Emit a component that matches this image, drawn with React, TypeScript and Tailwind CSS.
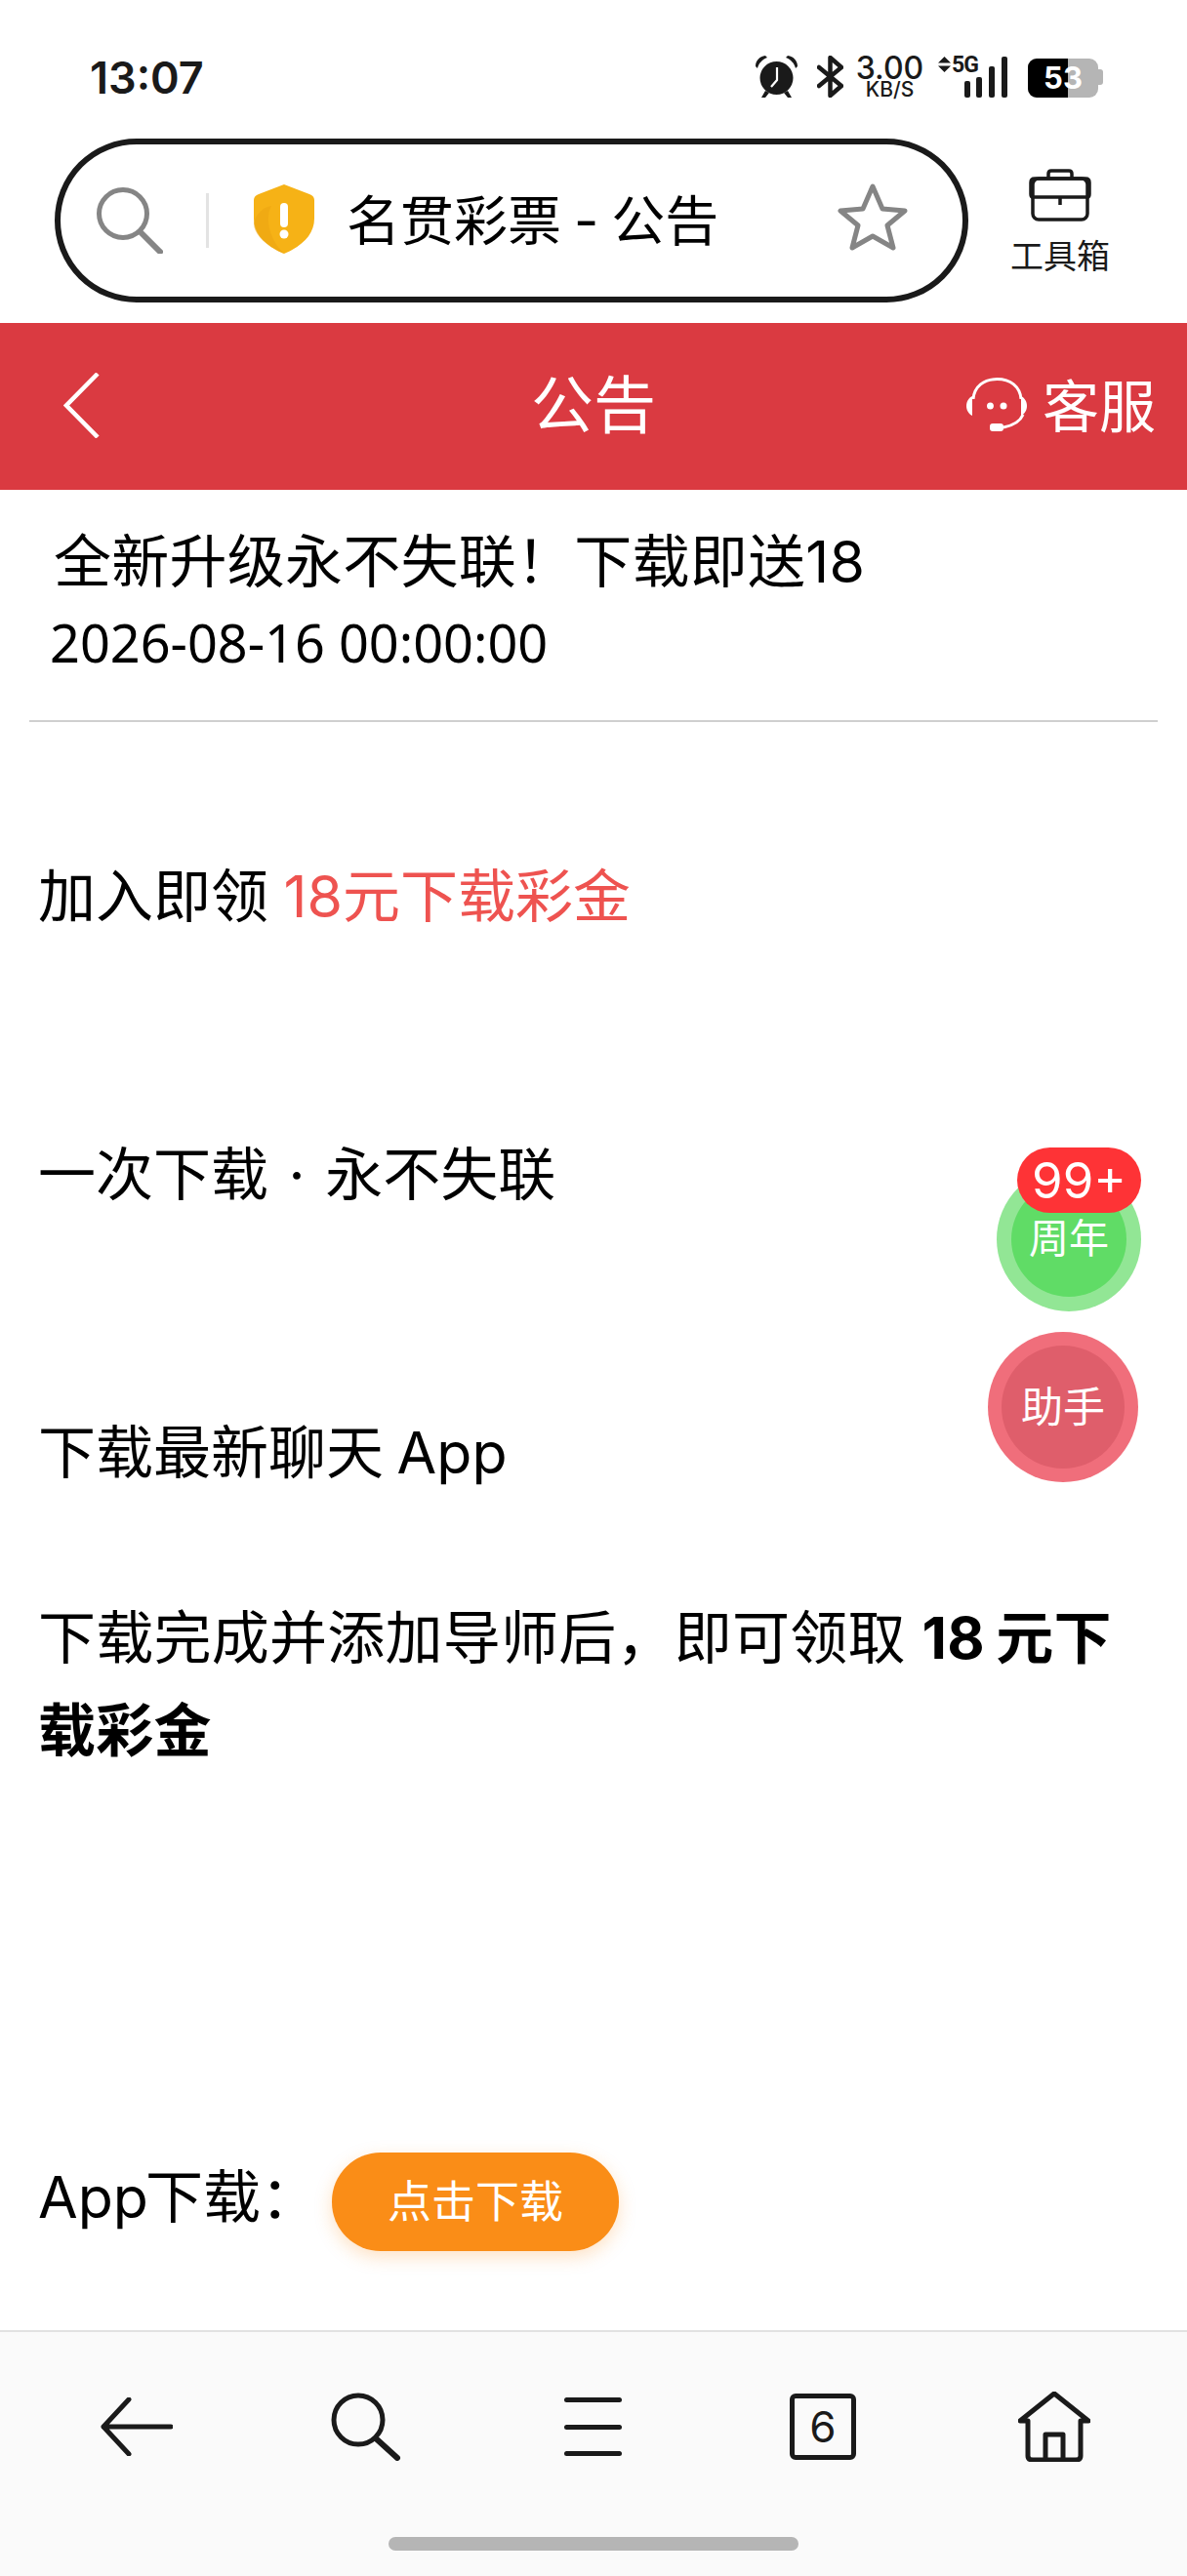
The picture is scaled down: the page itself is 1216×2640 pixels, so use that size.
const cjk = "font-['Inter','Noto_Sans_CJK_SC',sans-serif]";

function StatusIcons() {
  return (
    <div className="flex items-start text-[#1a1a1a]">
      <svg width="43" height="43" viewBox="0 0 43 43" className="shrink-0">
        <circle cx="21.5" cy="23" r="17" fill="#1a1a1a" />
        <path d="M0 11C0 5 4 1 10 0l2 2C7 4 3 8 2 13Z M43 11C43 5 39 1 33 0l-2 2c5 2 9 6 10 11Z" fill="#1a1a1a" />
        <path d="M10 36l-4 7h4l4-5Z M33 36l4 7h-4l-4-5Z" fill="#1a1a1a" />
        <path d="M22 12v13l-6 7" fill="none" stroke="#fff" strokeWidth="2.2" />
      </svg>
      <svg width="27" height="43" viewBox="0 0 27 43" className="ml-5 shrink-0">
        <path d="M2 31L25 12 13.500 2v39l11.500-10L2 12" fill="none" stroke="#1a1a1a" strokeWidth="4.500" strokeLinejoin="round" strokeLinecap="round" />
      </svg>
      <div className="ml-[14px] flex w-[67px] flex-col items-center">
        <span className="text-[32px] leading-[25px] font-medium">3.00</span>
        <span className="text-[21px] leading-[20px] font-medium">KB/S</span>
      </div>
      <div className="relative ml-4 h-[43px] w-[71px] shrink-0">
        <svg width="71" height="43" viewBox="0 0 71 43" className="absolute top-0 left-0">
          <path d="M0 7.500L6.500 1l6.500 6.500Z M0 10.500l6.500 6.500 6.500-6.500Z" fill="#1a1a1a" />
          <rect x="27" y="26" width="6" height="17" rx="2" fill="#1a1a1a" />
          <rect x="39" y="22" width="6" height="21" rx="2" fill="#1a1a1a" />
          <rect x="52" y="11" width="6" height="32" rx="2" fill="#1a1a1a" />
          <rect x="65" y="1" width="6" height="42" rx="2" fill="#1a1a1a" />
        </svg>
        <span className="absolute top-[-2px] left-[14px] font-['Roboto',sans-serif] text-[23px] leading-[24px] font-bold tracking-[-1px]">5G</span>
      </div>
      <div className="relative mt-[3px] ml-[21px] h-[40px] w-[72px] shrink-0 overflow-hidden rounded-[9px] bg-[#b5b5b5]">
        <div className="h-full w-[41px] bg-black" />
        <span className="absolute inset-0 text-center text-[31px] leading-[40px] font-bold text-white">53</span>
      </div>
      <span className="mt-[14px] h-[16px] w-[5px] rounded-r-[3px] bg-[#b5b5b5]" />
    </div>
  );
}

export default function App() {
  return (
    <div className={`relative flex h-[2640px] w-[1216px] flex-col overflow-hidden bg-white text-black ${cjk}`}>
      {/* status bar */}
      <div className="flex h-[142px] items-start justify-between pt-[57px] pr-[86px] pl-[92px]">
        <span className="text-[45px] leading-[45px] font-semibold text-[#1a1a1a]">13:07</span>
        <StatusIcons />
      </div>

      {/* address bar */}
      <div className="flex h-[189px] items-start pl-[56px]">
        <div className="flex h-[168px] w-[936px] shrink-0 items-center rounded-[84px] border-[6px] border-[#1a1a1a] pl-[37px]">
          <svg width="68" height="68" viewBox="0 0 68 68" className="shrink-0">
            <circle cx="27" cy="27" r="24.500" fill="none" stroke="#858585" strokeWidth="5" />
            <path d="M45 46l20 20" stroke="#858585" strokeWidth="6" strokeLinecap="round" />
          </svg>
          <span className="ml-[44px] h-[56px] w-[3px] shrink-0 bg-[#e3e3e3]" />
          <svg width="62" height="71" viewBox="0 0 62 71" className="-mt-[3px] ml-[46px] shrink-0">
            <path d="M31 0L57 10c3 1 5 3 5 6v19c0 16-12 28-31 36C12 63 0 51 0 35V16c0-3 2-5 5-6Z" fill="#f6b216" />
            <path d="M31 71C12 63 0 51 0 40c2-10 10-17 18-18-5 8-6 30 13 49Z" fill="#eda512" opacity="0.6" />
            <rect x="27" y="19" width="8" height="25" rx="4" fill="#fff" />
            <circle cx="31" cy="51" r="4.500" fill="#fff" />
          </svg>
          <span className="ml-[33px] text-[55px] leading-none whitespace-nowrap [word-spacing:-2.5px]">名贯彩票 - 公告</span>
          <svg width="72" height="69" viewBox="0 0 72 69" className="mr-[56px] ml-auto -mt-[8px] shrink-0">
            <path d="M36 3l10 23 23 2-18 15 6 23-21-12-21 12 6-23L3 28l23-2Z" fill="none" stroke="#858585" strokeWidth="5" strokeLinejoin="round" />
          </svg>
        </div>
        <div className="ml-[34px] flex w-[120px] flex-col items-center pt-[31px]">
          <svg width="64" height="54" viewBox="0 0 64 54">
            <rect x="4" y="10" width="56" height="42" rx="6" fill="none" stroke="#1a1a1a" strokeWidth="3.500" />
            <path d="M20 10V5c0-2 1-3 3-3h18c2 0 3 1 3 3v5 M2 14c0-3 1-4 4-4h52c3 0 4 1 4 4v12c0 2 0 3-2 3H4c-2 0-2-1-2-3Z M32 29v8" fill="none" stroke="#1a1a1a" strokeWidth="3.500" />
          </svg>
          <span className="mt-4 text-[34px] leading-[40px] text-[#1a1a1a]">工具箱</span>
        </div>
      </div>

      {/* red title bar */}
      <div className="relative flex h-[171px] items-center justify-center bg-[#da3a41]">
        <svg width="37" height="67" viewBox="0 0 37 67" className="absolute top-[51px] left-[65px]">
          <path d="M35 1L3 33.500 35 66" fill="none" stroke="#fff" strokeWidth="4.500" />
        </svg>
        <span className="-mt-[3px] text-[64px] leading-none text-white">公告</span>
        <div className="absolute right-[32px] flex items-center gap-[16px]">
          <svg width="62" height="56" viewBox="0 0 62 56" className="-mt-[4px]">
            <path d="M7 22C8 9 18 1.500 31.500 1.500S55 9 56 22" fill="none" stroke="#fff" strokeWidth="3" />
            <path d="M6 19C2 21 0 25 0 29s2 8 6 10Z M56 19c4 2 6 6 6 10s-2 8-6 10Z" fill="#fff" />
            <circle cx="24.500" cy="29" r="3.500" fill="#fff" />
            <circle cx="38" cy="29" r="3.500" fill="#fff" />
            <path d="M58 38c-3 7-10 11-20 13" fill="none" stroke="#fff" strokeWidth="3" />
            <rect x="24" y="47" width="14" height="8" rx="3" fill="#fff" />
          </svg>
          <span className="text-[58px] leading-none text-white">客服</span>
        </div>
      </div>

      {/* article */}
      <div className="px-[30px]">
        <div className="border-b-2 border-[#cfcfcf] pb-[49px]">
          <p className="mt-[38px] pl-[25px] text-[59px] leading-[72px] tracking-[0.25px]">全新升级永不失联！下载即送18</p>
          <p className="mt-[15px] pl-[21px] font-['Noto_Sans',sans-serif] text-[54px] leading-[62px]">2026-08-16 00:00:00</p>
        </div>
      </div>
      <div className="pr-[50px] pl-[39px] text-[59px] leading-[95px]">
        <p className="mt-[131px]">加入即领 <span className="-ml-px text-[#ee5350]">18元下载彩金</span></p>
        <p className="mt-[190px]">一次下载 <span className="mx-1">·</span> 永不失联</p>
        <p className="mt-[190px] [word-spacing:-3px]">下载最新聊天 App</p>
        <p className="mt-[95px] tracking-[0.25px]">下载完成并添加导师后，即可领取 <strong className="[word-spacing:-3px]">18 元下载彩金</strong></p>
        <div className="mt-[375px] flex items-center">
          <span>App<span className="-ml-[3px]">下载：</span></span>
          <span className="mt-[10px] ml-[14px] flex h-[101px] w-[294px] items-center justify-center rounded-[50px] bg-[#fa8d17] text-[45px] text-white shadow-[0_6px_18px_rgba(250,141,23,0.25)]">点击下载</span>
        </div>
      </div>

      {/* floating buttons */}
      <div className="absolute top-[1196px] left-[1021px] flex h-[148px] w-[148px] items-center justify-center rounded-full bg-[#92e695]">
        <div className="flex h-[118px] w-[118px] items-center justify-center rounded-full bg-[#60dc66] text-[41px] text-white">周年</div>
      </div>
      <span className="absolute top-[1176px] left-[1042px] h-[67px] w-[127px] rounded-[34px] bg-[#fe3336] text-center text-[51px] leading-[67px] text-white">99+</span>
      <div className="absolute top-[1365px] left-[1012px] flex h-[154px] w-[154px] items-center justify-center rounded-full bg-[#f06e7b]">
        <div className="flex h-[126px] w-[126px] items-center justify-center rounded-full bg-[#df5e6b] text-[43px] text-white">助手</div>
      </div>

      {/* bottom bar */}
      <div className="absolute right-0 bottom-0 left-0 h-[252px] border-t-2 border-[#e2e2e2] bg-[#fafafa]">
        <div className="flex h-[194px] items-center pl-[103px]">
          <svg width="74" height="60" viewBox="0 0 74 60" className="shrink-0">
            <path d="M72 30H3M29 2L3 30l26 28" fill="none" stroke="#1a1a1a" strokeWidth="5" strokeLinecap="round" strokeLinejoin="round" />
          </svg>
          <svg width="72" height="70" viewBox="0 0 72 70" className="ml-[162px] shrink-0">
            <circle cx="28" cy="28" r="25" fill="none" stroke="#1a1a1a" strokeWidth="5" />
            <path d="M46 47l22 20" stroke="#1a1a1a" strokeWidth="6" strokeLinecap="round" />
          </svg>
          <div className="ml-[167px] flex h-[60px] w-[59px] shrink-0 flex-col justify-between">
            <span className="h-[5px] rounded bg-[#1a1a1a]" />
            <span className="h-[5px] rounded bg-[#1a1a1a]" />
            <span className="h-[5px] rounded bg-[#1a1a1a]" />
          </div>
          <div className="ml-[172px] flex h-[68px] w-[68px] shrink-0 items-center justify-center rounded-md border-[5px] border-[#1a1a1a] text-[44px] text-[#1a1a1a]">6</div>
          <svg width="74" height="72" viewBox="0 0 74 72" className="ml-[166px] shrink-0">
            <path d="M37 2L2 30h8v36c0 3 2 4 5 4h44c3 0 5-1 5-4V30h8Z M28 70V44h18v26" fill="none" stroke="#1a1a1a" strokeWidth="5" strokeLinejoin="round" />
          </svg>
        </div>
        <div className="mx-auto mt-4 h-[14px] w-[420px] rounded-full bg-[#b5b5b5]" />
      </div>
    </div>
  );
}
